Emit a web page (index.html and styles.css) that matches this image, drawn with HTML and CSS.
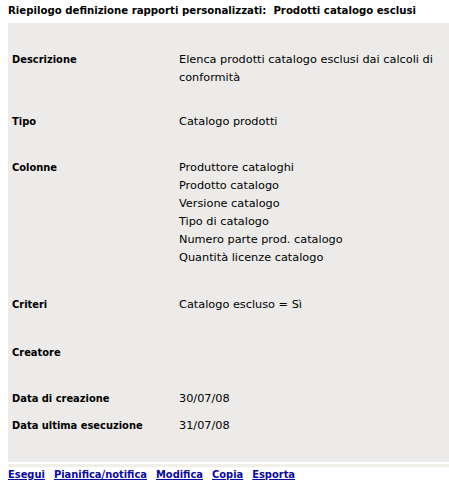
FILE: index.html
```html
<!DOCTYPE html>
<html lang="it">
<head>
    <meta charset="UTF-8">
    <title>Riepilogo definizione rapporti personalizzati</title>
    <link rel="stylesheet" href="styles.css">
</head>
<body>
    <h1 class="titolo">Riepilogo definizione rapporti personalizzati:&nbsp; Prodotti catalogo esclusi</h1>

    <div class="pannello">
        <table class="riepilogo">
            <tr class="prima">
                <th>Descrizione</th>
                <td>Elenca prodotti catalogo esclusi dai calcoli di conformità</td>
            </tr>
            <tr>
                <th>Tipo</th>
                <td>Catalogo prodotti</td>
            </tr>
            <tr class="lista">
                <th>Colonne</th>
                <td>
                    Produttore cataloghi<br>
                    Prodotto catalogo<br>
                    Versione catalogo<br>
                    Tipo di catalogo<br>
                    Numero parte prod. catalogo<br>
                    Quantità licenze catalogo
                </td>
            </tr>
            <tr>
                <th>Criteri</th>
                <td>Catalogo escluso = Sì</td>
            </tr>
            <tr class="vuota">
                <th>Creatore</th>
                <td></td>
            </tr>
            <tr class="stretta">
                <th>Data di creazione</th>
                <td>30/07/08</td>
            </tr>
            <tr class="ultima">
                <th>Data ultima esecuzione</th>
                <td>31/07/08</td>
            </tr>
        </table>
    </div>

    <div class="azioni">
        <a href="#">Esegui</a>
        <a href="#">Pianifica/notifica</a>
        <a href="#">Modifica</a>
        <a href="#">Copia</a>
        <a href="#">Esporta</a>
    </div>
</body>
</html>
```

FILE: styles.css
```css
body {
    margin: 0;
    padding: 0 0 0 8px;
    font-family: "DejaVu Sans Condensed", "DejaVu Sans", sans-serif;
    font-size: 11px;
    color: #000;
    background: #fff;
}
.titolo {
    margin: 0;
    padding: 4px 0 0;
    height: 19px;
    font-size: 11.3px;
    font-weight: bold;
    line-height: 14px;
}
.pannello {
    background-color: #ecebe9;
    padding: 28px 0 27px;
    border-bottom: 2px solid #fff;
    box-shadow: 0 3px 0 #f1f0e8;
}
.riepilogo {
    border-collapse: collapse;
    width: 100%;
}
.riepilogo th,
.riepilogo td {
    padding: 14px 0;
    vertical-align: top;
    line-height: 17.5px;
    text-align: left;
}
.riepilogo th {
    width: 167px;
    padding-left: 4px;
    font-weight: bold;
}
.riepilogo td {
    font-family: "DejaVu Sans", sans-serif;
    font-size: 11.3px;
}
.riepilogo .prima th,
.riepilogo .prima td {
    padding-top: 0;
    padding-bottom: 13px;
}
.riepilogo .lista th,
.riepilogo .lista td {
    padding-bottom: 15px;
}
.riepilogo .lista td {
    line-height: 18px;
}
.riepilogo .vuota th {
    padding-top: 17px;
}
.riepilogo .stretta th,
.riepilogo .stretta td {
    padding-bottom: 0;
}
.riepilogo .ultima th,
.riepilogo .ultima td {
    padding-top: 10px;
    padding-bottom: 0;
}
.azioni {
    display: flex;
    gap: 9px;
    padding-top: 4px;
    line-height: 14px;
}
.azioni a {
    color: #0a0a9c;
    font-weight: bold;
    text-decoration: underline;
}
```
